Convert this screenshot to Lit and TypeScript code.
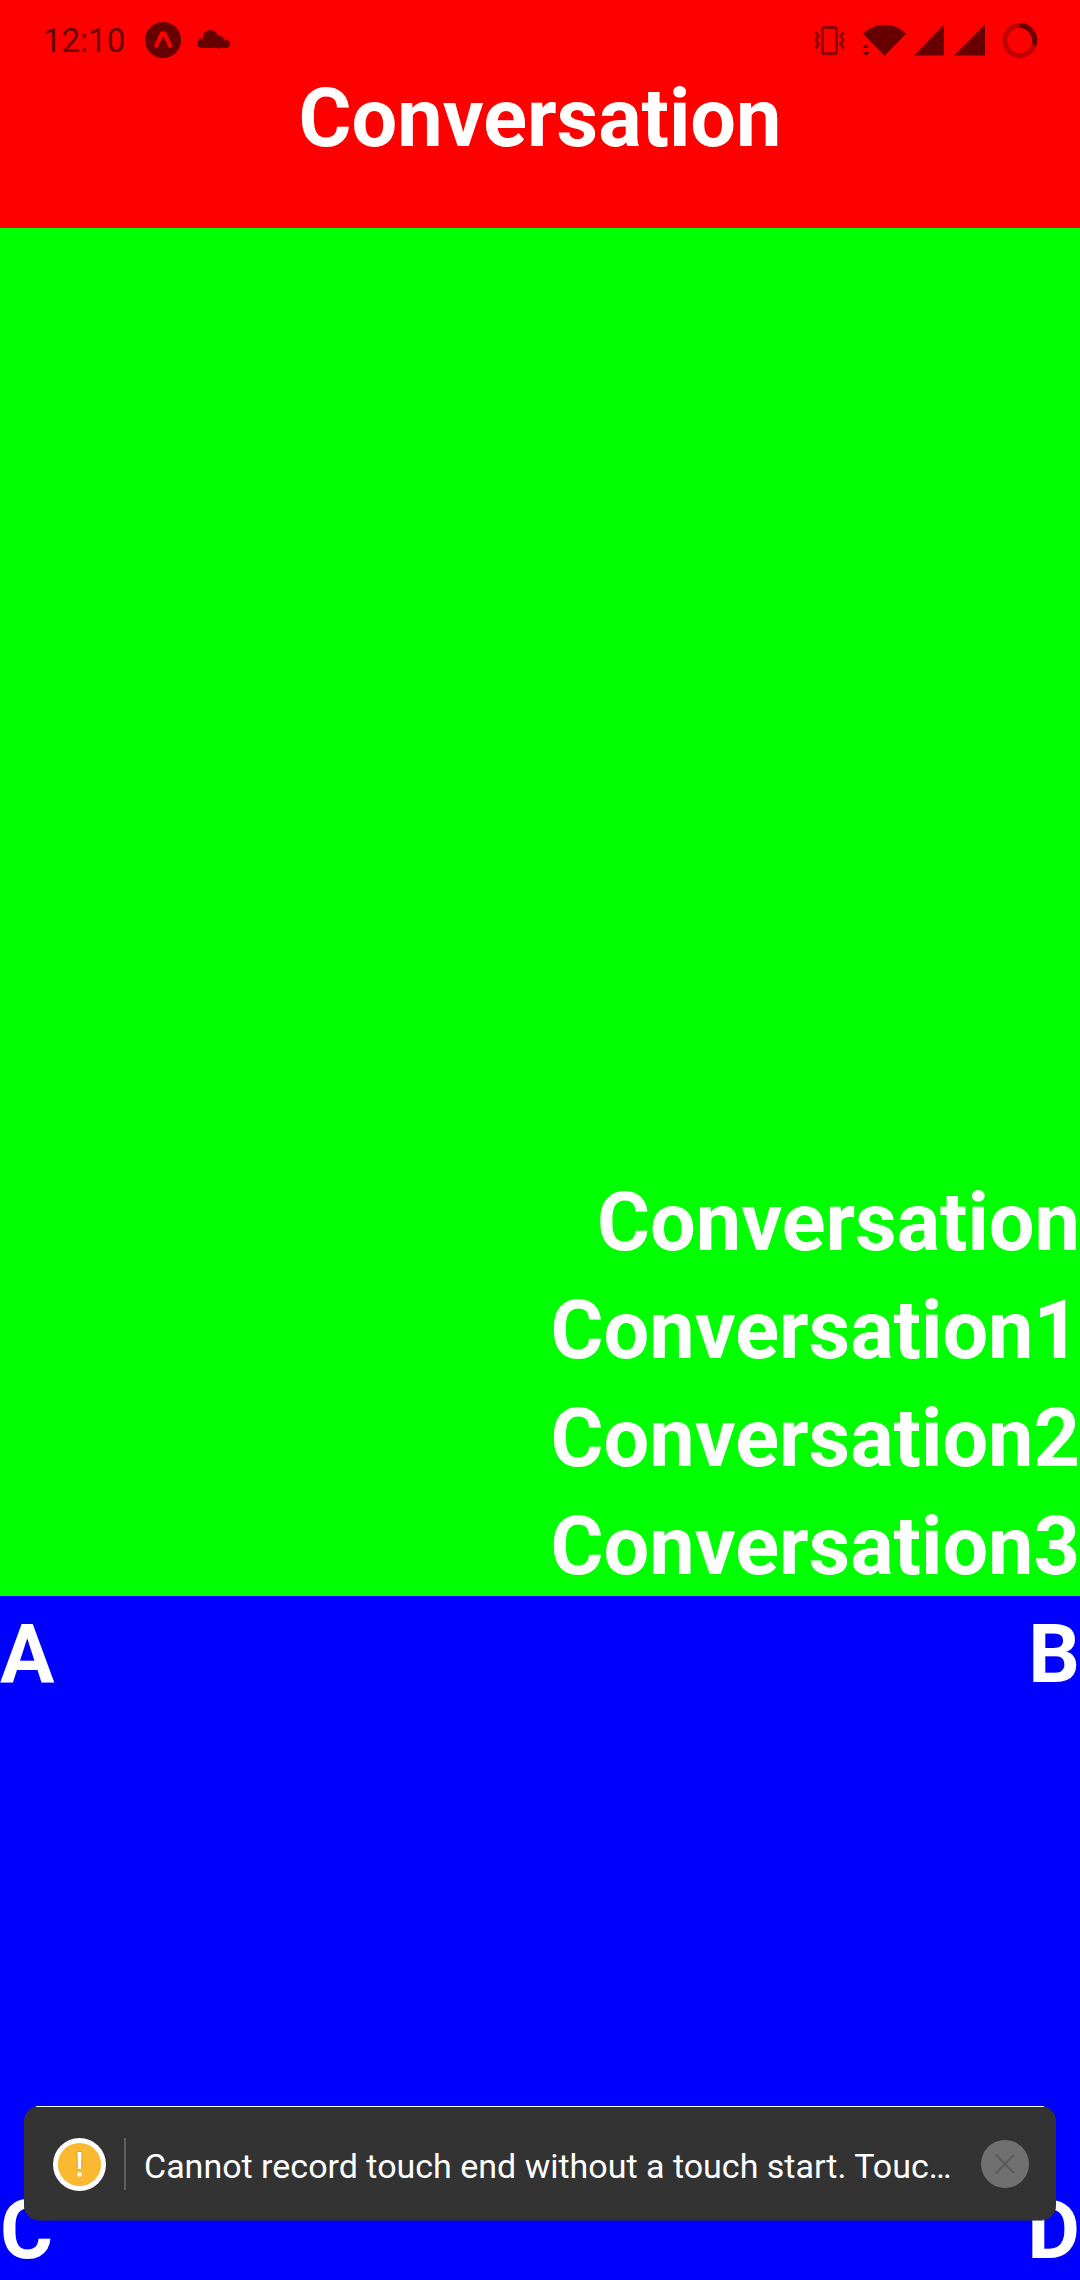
import { LitElement, html, css } from "lit";
import { customElement } from "lit/decorators.js";

@customElement("status-bar")
export class StatusBar extends LitElement {
  static styles = css`
    :host {
      display: flex;
      align-items: center;
      justify-content: space-between;
      height: 82px;
      padding: 0 42px;
      box-sizing: border-box;
      color: #660000;
      font: 400 33px/40px Roboto, sans-serif;
    }
    .group {
      display: flex;
      align-items: center;
    }
    .left {
      gap: 16px;
    }
    .right {
      gap: 8px;
    }
    .time {
      padding: 0 4px 0 1px;
    }
    svg {
      display: block;
      fill: currentColor;
    }
    .vibrate {
      fill: none;
      stroke: #8c0000;
      stroke-width: 3;
    }
    .ring {
      fill: none;
      stroke: #bf0000;
      stroke-width: 5;
    }
    .ring .progress {
      stroke: #660000;
    }
  `;

  render() {
    return html`
      <div class="group left">
        <time class="time">12:10</time>
        <svg width="36" height="38" viewBox="0 0 36 38" role="img" aria-label="Expo">
          <circle cx="18" cy="18" r="18" />
          <path fill="#ff0000" d="M15.6 9.500h5.200l6.800 14.500-2.600 2.200-1.600-1.400L18.200 14l-5.200 10.800-1.700 1.400-2.400-2z" />
        </svg>
        <svg width="33" height="22" viewBox="0 0 33 22" role="img" aria-label="Cloud">
          <circle cx="4.700" cy="13.300" r="4.700" />
          <circle cx="13.300" cy="7.700" r="7.700" />
          <circle cx="21.500" cy="12" r="6.400" />
          <circle cx="29" cy="14" r="4" />
          <path d="M4.700 10h24.300v8h-24.300z" />
        </svg>
      </div>
      <div class="group right">
        <svg width="40" height="38" viewBox="0 0 40 38" role="img" aria-label="Vibrate">
          <g class="vibrate">
            <rect x="8.500" y="5.400" width="14" height="26.300" rx="2" />
            <path d="M1.500 10.500l2.800 3.400-2.400 4.200 2.400 4.200-2.800 4M29.500 10.500l-2.800 3.400 2.400 4.200-2.400 4.200 2.800 4" />
          </g>
        </svg>
        <svg width="44" height="38" viewBox="0 0 44 38" role="img" aria-label="Wi-Fi">
          <path d="M1 11.700Q10 2.700 22.500 2.700T44 11.700L22.500 33.700z" />
          <path d="M0.500 26l3.500-3.700 3.500 3.700zM0.500 30h7l-3.500 3.700z" />
        </svg>
        <svg width="30" height="38" viewBox="0 0 30 38" role="img" aria-label="Signal 1">
          <path d="M0 33.500L30 2.500v31z" />
        </svg>
        <svg width="34" height="38" viewBox="0 0 34 38" role="img" aria-label="Signal 2">
          <path d="M2 33.500L33 2.500v31z" />
        </svg>
        <svg width="44" height="38" viewBox="0 0 44 38" role="img" aria-label="Battery">
          <g class="ring">
            <circle cx="25.700" cy="18.500" r="15" />
            <path class="progress" d="M25.700 3.500A15 15 0 0 1 40.100 22.500" />
          </g>
        </svg>
      </div>
    `;
  }
}

@customElement("warning-toast")
export class WarningToast extends LitElement {
  static styles = css`
    :host {
      display: flex;
      align-items: center;
      height: 114px;
      padding: 2px 27px 0 29px;
      box-sizing: border-box;
      border-radius: 15px;
      background: #333333;
      box-shadow: 0 1px 0 rgba(51, 51, 51, 0.6);
      color: #ffffff;
      font: 400 34px/44px Roboto, sans-serif;
    }
    :host::before {
      content: "";
      position: absolute;
      inset: 0 12px auto;
      height: 1px;
      background: #ffffff;
    }
    svg {
      display: block;
      flex: none;
    }
    .divider {
      width: 2px;
      height: 52px;
      margin: 0 18px;
      background: #5e5e5e;
    }
    .message {
      flex: 1;
      min-width: 0;
      margin: 0;
      padding-top: 4px;
      overflow: hidden;
      white-space: nowrap;
    }
    .close {
      display: flex;
      align-items: center;
      justify-content: center;
      width: 48px;
      height: 48px;
      padding: 0;
      border: 0;
      border-radius: 50%;
      background: #707070;
      cursor: pointer;
    }
  `;

  render() {
    return html`
      <svg width="53" height="53" viewBox="0 0 53 53" role="img" aria-label="Warning">
        <circle cx="26.500" cy="26.500" r="26.500" fill="#ffffff" />
        <circle cx="26.500" cy="26.500" r="21.600" fill="#fab931" />
        <path d="M26.500 15.500v13.500" fill="none" stroke="#e0a52c" stroke-width="6" stroke-linecap="round" />
        <path d="M24.500 14h4l-0.400 17h-3.200z" fill="#ffffff" />
        <circle cx="26.500" cy="36.500" r="2.300" fill="#ffffff" />
      </svg>
      <span class="divider"></span>
      <p class="message">Cannot record touch end without a touch start. Touc…</p>
      <button class="close" aria-label="Dismiss">
        <svg width="20" height="20" viewBox="0 0 20 20">
          <path d="M1 1l18 18M19 1L1 19" fill="none" stroke="#5c5c5c" stroke-width="2.400" />
        </svg>
      </button>
    `;
  }
}

@customElement("app-root")
export class AppRoot extends LitElement {
  static styles = css`
    :host {
      display: grid;
      grid-template-rows: 1fr 6fr 3fr;
      position: relative;
      min-height: 100vh;
      overflow: hidden;
      color: #ffffff;
      font: 700 81px/98px Roboto, sans-serif;
    }
    .text {
      margin: 0;
      padding-top: 10px;
      font: inherit;
    }
    .header {
      display: flex;
      align-items: center;
      justify-content: center;
      background: #ff0000;
    }
    .body {
      display: flex;
      flex-direction: column;
      align-items: flex-end;
      justify-content: flex-end;
      background: #00ff00;
    }
    .footer {
      display: flex;
      flex-direction: column;
      justify-content: space-between;
      background: #0000ff;
    }
    .row {
      display: flex;
      justify-content: space-between;
    }
    status-bar {
      position: absolute;
      inset: 0 0 auto;
    }
    warning-toast {
      position: absolute;
      inset: auto 24px 60px;
    }
  `;

  render() {
    return html`
      <header class="header"><h1 class="text">Conversation</h1></header>
      <main class="body">
        ${["", "1", "2", "3"].map((n) => html`<p class="text">Conversation${n}</p>`)}
      </main>
      <footer class="footer">
        <div class="row"><p class="text">A</p><p class="text">B</p></div>
        <div class="row"><p class="text">C</p><p class="text">D</p></div>
      </footer>
      <status-bar></status-bar>
      <warning-toast></warning-toast>
    `;
  }
}
